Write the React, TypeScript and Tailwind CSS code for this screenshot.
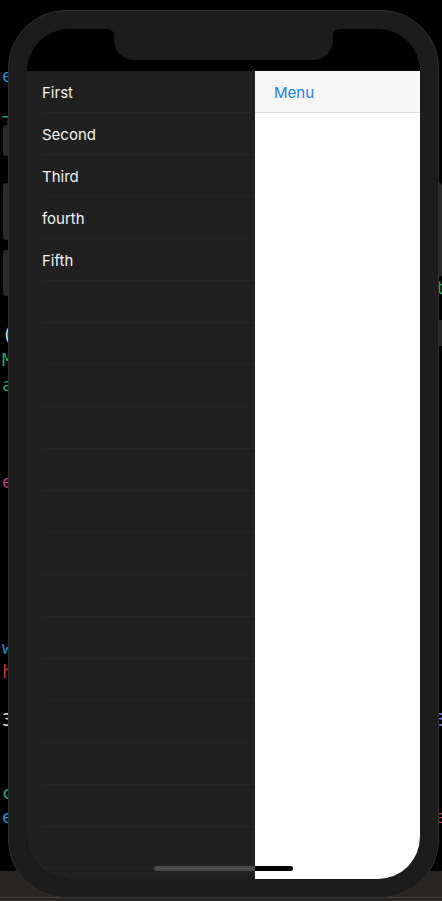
import React from "react";

const items = ["First", "Second", "Third", "fourth", "Fifth"];

// bits of the code editor that peek out around the simulator
const leftGlyphs = [
  { ch: "e", top: 64, color: "text-[#1b8fd8]" },
  { ch: "ד", top: 108, color: "text-[#14a35c]" },
  { ch: "(", top: 323, color: "text-[#dddddd]" },
  { ch: "M", top: 348, color: "text-[#14b068]" },
  { ch: "a", top: 373, color: "text-[#14b068]" },
  { ch: "e", top: 470, color: "text-[#c2307c]" },
  { ch: "w", top: 636, color: "text-[#2a8ad2]" },
  { ch: "h", top: 660, color: "text-[#d23232]" },
  { ch: "3", top: 708, color: "text-[#dddddd]" },
  { ch: "c", top: 781, color: "text-[#14b068]" },
  { ch: "e", top: 805, color: "text-[#1b8fd8]" },
];

const rightGlyphs = [
  { ch: "t", top: 276, color: "text-[#14b068]" },
  { ch: "3", top: 708, color: "text-[#7474e6]" },
  { ch: "e", top: 805, color: "text-[#d23232]" },
];

function NotchCorner({ flip }: { flip?: boolean }) {
  return (
    <svg
      width="7"
      height="7"
      viewBox="0 0 7 7"
      className={`absolute top-0 ${flip ? "right-[-7px] scale-x-[-1]" : "left-[-7px]"}`}
    >
      <path d="M7 0 L7 7 Q7 0 0 0 Z" fill="#1c1c1c" />
    </svg>
  );
}

export default function App() {
  return (
    <div
      className="relative h-[901px] w-[442px] overflow-hidden bg-black"
      style={{ fontFamily: "Inter, 'Noto Sans', sans-serif" }}
    >
      {/* editor behind */}
      <div className="absolute inset-0 font-['DejaVu_Sans_Mono',monospace] text-[18px] leading-[24px]">
        {leftGlyphs.map((g, i) => (
          <span key={i} className={`absolute left-[2px] ${g.color}`} style={{ top: g.top }}>
            {g.ch}
          </span>
        ))}
        {rightGlyphs.map((g, i) => (
          <span key={i} className={`absolute left-[435px] ${g.color}`} style={{ top: g.top }}>
            {g.ch}
          </span>
        ))}
        <div className="absolute left-[3px] top-[125px] h-[31px] w-[6px] rounded-sm bg-[#2a2a2a]" />
        <div className="absolute left-[3px] top-[183px] h-[57px] w-[6px] rounded-sm bg-[#2a2a2a]" />
        <div className="absolute left-[3px] top-[250px] h-[46px] w-[6px] rounded-sm bg-[#2a2a2a]" />
        <div className="absolute left-[436px] top-[183px] h-[94px] w-[6px] rounded-sm bg-[#2a2a2a]" />
        <div className="absolute left-[436px] top-[320px] h-[26px] w-[6px] bg-[#262626]" />
        <div className="absolute bottom-0 left-0 right-0 h-[30px] bg-[#272624]" />
        <div className="absolute bottom-[3px] left-0 right-0 h-px bg-[#3a3a3a]" />
      </div>

      {/* simulator */}
      <div className="absolute left-[8px] top-[10px] h-[888px] w-[431px] rounded-[58px] border border-[#303030] bg-[#1c1c1c] p-[18px]">
        <div className="relative flex h-full flex-col overflow-hidden rounded-[42px] bg-black">
          <div className="absolute left-[87px] top-0 h-[31px] w-[219px] rounded-b-[20px] bg-[#1c1c1c]">
            <NotchCorner />
            <NotchCorner flip />
          </div>
          <div className="h-[42px] shrink-0" />
          <div className="flex min-h-0 flex-1">
            <div className="w-[228px] shrink-0 overflow-hidden bg-[#202020]">
              {Array.from({ length: 20 }).map((_, i) => (
                <div key={i} className="pl-[15px]">
                  <div className="flex h-[42px] items-center border-b border-[#262626] pt-[3px] text-[15px] text-[#f2f2f2]">
                    {items[i] ?? ""}
                  </div>
                </div>
              ))}
            </div>
            <div className="flex flex-1 flex-col bg-white">
              <div className="flex h-[42px] items-center border-b border-[#d8d8d8] bg-[#f7f7f7] pl-[19px] pt-[3px] text-[15px] text-[#147efb]">
                Menu
              </div>
            </div>
          </div>
          <div className="absolute bottom-[8px] left-[127px] flex h-[5px] w-[139px] overflow-hidden rounded-full">
            <div className="w-[101px] bg-[#4a4a4a]" />
            <div className="flex-1 bg-black" />
          </div>
        </div>
      </div>
    </div>
  );
}
